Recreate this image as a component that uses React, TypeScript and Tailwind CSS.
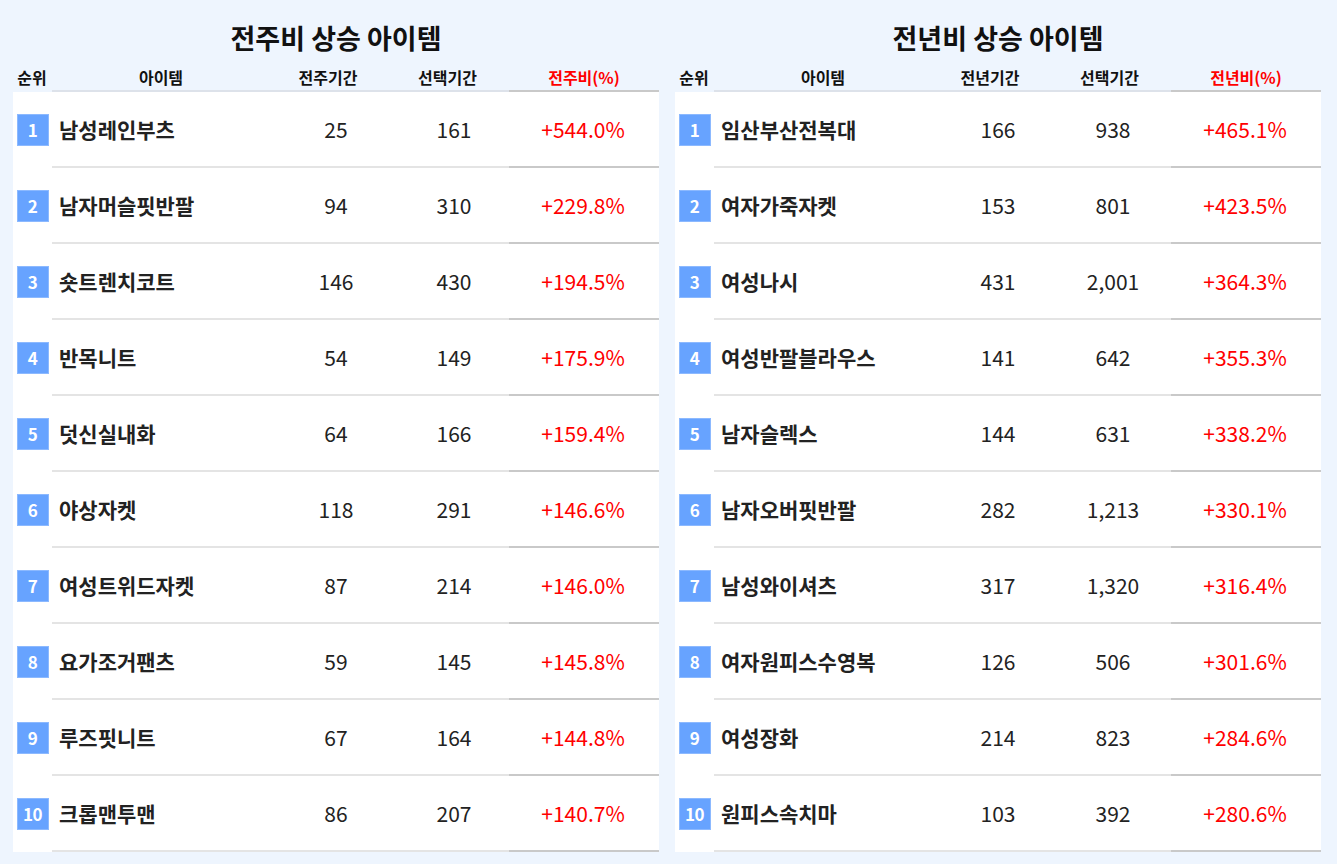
import React from 'react';

type Row = { name: string; prev: string; cur: string; rate: string };

const weekly: Row[] = [
  { name: '남성레인부츠', prev: '25', cur: '161', rate: '+544.0%' },
  { name: '남자머슬핏반팔', prev: '94', cur: '310', rate: '+229.8%' },
  { name: '숏트렌치코트', prev: '146', cur: '430', rate: '+194.5%' },
  { name: '반목니트', prev: '54', cur: '149', rate: '+175.9%' },
  { name: '덧신실내화', prev: '64', cur: '166', rate: '+159.4%' },
  { name: '야상자켓', prev: '118', cur: '291', rate: '+146.6%' },
  { name: '여성트위드자켓', prev: '87', cur: '214', rate: '+146.0%' },
  { name: '요가조거팬츠', prev: '59', cur: '145', rate: '+145.8%' },
  { name: '루즈핏니트', prev: '67', cur: '164', rate: '+144.8%' },
  { name: '크롭맨투맨', prev: '86', cur: '207', rate: '+140.7%' },
];

const yearly: Row[] = [
  { name: '임산부산전복대', prev: '166', cur: '938', rate: '+465.1%' },
  { name: '여자가죽자켓', prev: '153', cur: '801', rate: '+423.5%' },
  { name: '여성나시', prev: '431', cur: '2,001', rate: '+364.3%' },
  { name: '여성반팔블라우스', prev: '141', cur: '642', rate: '+355.3%' },
  { name: '남자슬렉스', prev: '144', cur: '631', rate: '+338.2%' },
  { name: '남자오버핏반팔', prev: '282', cur: '1,213', rate: '+330.1%' },
  { name: '남성와이셔츠', prev: '317', cur: '1,320', rate: '+316.4%' },
  { name: '여자원피스수영복', prev: '126', cur: '506', rate: '+301.6%' },
  { name: '여성장화', prev: '214', cur: '823', rate: '+284.6%' },
  { name: '원피스속치마', prev: '103', cur: '392', rate: '+280.6%' },
];

const RankTable = ({
  title,
  prevLabel,
  rateLabel,
  rows,
  curPad,
}: {
  title: string;
  prevLabel: string;
  rateLabel: string;
  rows: Row[];
  curPad: string;
}) => (
  <div className="w-[646px] flex flex-col">
    <h2 className="h-[62px] pt-[19px] text-center text-[27px] leading-[38px] font-bold text-[#111]">{title}</h2>

    {/* header */}
    <div className="grid grid-cols-[39px_218px_116px_123px_150px] h-[30px] pt-[2px] text-[16px] font-bold text-[#111]">
      <div className="text-center leading-[26px] pr-[1px]">순위</div>
      <div className="text-center leading-[26px] border-b-2 border-[#dde2ea]">아이템</div>
      <div className="text-center leading-[26px] border-b-2 border-[#dde2ea]">{prevLabel}</div>
      <div className="text-center leading-[26px] border-b-2 border-[#dde2ea]">선택기간</div>
      <div className="text-center leading-[26px] border-b-2 border-[#c9c9c9] text-[#ff0000]">{rateLabel}</div>
    </div>

    {/* rows */}
    <div className="bg-white">
      {rows.map((r, i) => (
        <div key={i} className="grid grid-cols-[39px_227px_114px_116px_150px] h-[76px] text-[21px] text-[#222]">
          <div className="flex items-center justify-center">
            <span className="w-8 h-8 flex items-center justify-center bg-[#67a3ff] border border-[#8cb9ff] text-white font-bold text-[17px] tracking-[-0.5px]">
              {i + 1}
            </span>
          </div>
          <div className="flex items-center pl-[7px] pt-[2px] border-b-2 border-[#e4e4e4] font-bold text-[21px] text-[#222]">{r.name}</div>
          <div className="flex items-center justify-center pt-[2px] border-b-2 border-[#e4e4e4]">{r.prev}</div>
          <div className={`flex items-center justify-center pt-[2px] border-b-2 border-[#e4e4e4] ${curPad}`}>{r.cur}</div>
          <div className="flex items-center justify-center pt-[2px] pr-[2px] border-b-2 border-[#c9c9c9] text-[#ff0000]">{r.rate}</div>
        </div>
      ))}
    </div>
  </div>
);

export default function App() {
  return (
    <div className="min-h-screen bg-[#eef5fe] flex gap-4 pl-[13px] pr-4 font-['Noto_Sans_CJK_KR','Noto_Sans',sans-serif]">
      <RankTable title="전주비 상승 아이템" prevLabel="전주기간" rateLabel="전주비(%)" rows={weekly} curPad="pl-[6px]" />
      <RankTable title="전년비 상승 아이템" prevLabel="전년기간" rateLabel="전년비(%)" rows={yearly} curPad="pl-0" />
    </div>
  );
}
